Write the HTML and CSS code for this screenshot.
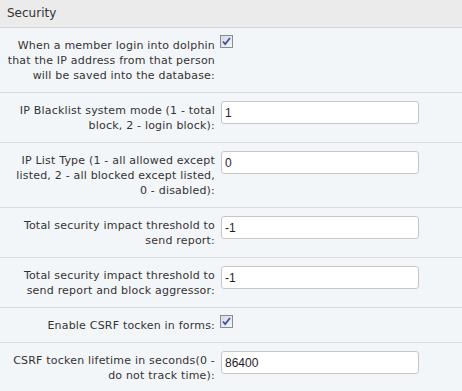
FILE: index.html
```html
<!DOCTYPE html>
<html lang="en">
<head>
    <meta charset="UTF-8">
    <title>Security settings</title>
    <link rel="stylesheet" href="styles.css">
</head>
<body>
    <div class="settings">
        <div class="settings-header">Security</div>

        <div class="row">
            <div class="label">When a member login into dolphin that the IP address from that person will be saved into the database:</div>
            <div class="value">
                <span class="check">
                    <svg width="13" height="13" viewBox="0 0 13 13">
                        <defs>
                            <linearGradient id="cbg" x1="0" y1="0" x2="1" y2="1">
                                <stop offset="0" stop-color="#d4d6e2"/>
                                <stop offset="1" stop-color="#f6f7fb"/>
                            </linearGradient>
                        </defs>
                        <rect x="0.5" y="0.5" width="12" height="12" fill="url(#cbg)" stroke="#8a8c90"/>
                        <path d="M3 6.5 L5.2 9 L10 3" fill="none" stroke="#3f4f9a" stroke-width="1.8"/>
                    </svg>
                </span>
            </div>
        </div>

        <div class="row">
            <div class="label">IP Blacklist system mode (1 - total block, 2 - login block):</div>
            <div class="value"><input type="text" class="field" value="1"></div>
        </div>

        <div class="row">
            <div class="label">IP List Type (1 - all allowed except listed, 2 - all blocked except listed, 0&nbsp;-&nbsp;disabled):</div>
            <div class="value"><input type="text" class="field" value="0"></div>
        </div>

        <div class="row">
            <div class="label">Total security impact threshold to send report:</div>
            <div class="value"><input type="text" class="field" value="-1"></div>
        </div>

        <div class="row">
            <div class="label">Total security impact threshold to send report and block aggressor:</div>
            <div class="value"><input type="text" class="field" value="-1"></div>
        </div>

        <div class="row">
            <div class="label">Enable CSRF tocken in forms:</div>
            <div class="value">
                <span class="check">
                    <svg width="13" height="13" viewBox="0 0 13 13">
                        <rect x="0.5" y="0.5" width="12" height="12" fill="url(#cbg)" stroke="#8a8c90"/>
                        <path d="M3 6.5 L5.2 9 L10 3" fill="none" stroke="#3f4f9a" stroke-width="1.8"/>
                    </svg>
                </span>
            </div>
        </div>

        <div class="row">
            <div class="label">CSRF tocken lifetime in seconds(0 - do not track time):</div>
            <div class="value"><input type="text" class="field" value="86400"></div>
        </div>
    </div>
</body>
</html>
```

FILE: styles.css
```css
* {
    margin: 0;
    padding: 0;
    box-sizing: border-box;
}

body {
    font-family: 'DejaVu Sans', Verdana, sans-serif;
    font-size: 11px;
    color: #333;
    background: #f3f6f9;
}

.settings-header {
    height: 28px;
    line-height: 27px;
    padding: 0 7px;
    font-size: 12px;
    background: #ebebeb;
    border-bottom: 1px solid #d6d6d6;
}

.row {
    display: flex;
    align-items: flex-start;
    padding: 10px 0 9px;
    line-height: 15px;
    background: #f3f6f9;
    border-bottom: 1px solid #dadada;
}

.label {
    flex: 0 0 221px;
    padding: 0 6px 0 5px;
    text-align: right;
    letter-spacing: 0.2px;
}

.value {
    flex: 1;
    display: flex;
}

.check {
    display: block;
    width: 13px;
    height: 13px;
    margin: -3px 0 0 -1px;
}

.check svg {
    display: block;
}

.field {
    width: 198px;
    height: 23px;
    margin-top: -2px;
    padding: 0 3px;
    border: 1px solid #c6c6c6;
    border-radius: 3px;
    background: white;
    font-family: 'Liberation Sans', Arial, sans-serif;
    font-size: 12px;
    color: #2a1a2a;
}
```
